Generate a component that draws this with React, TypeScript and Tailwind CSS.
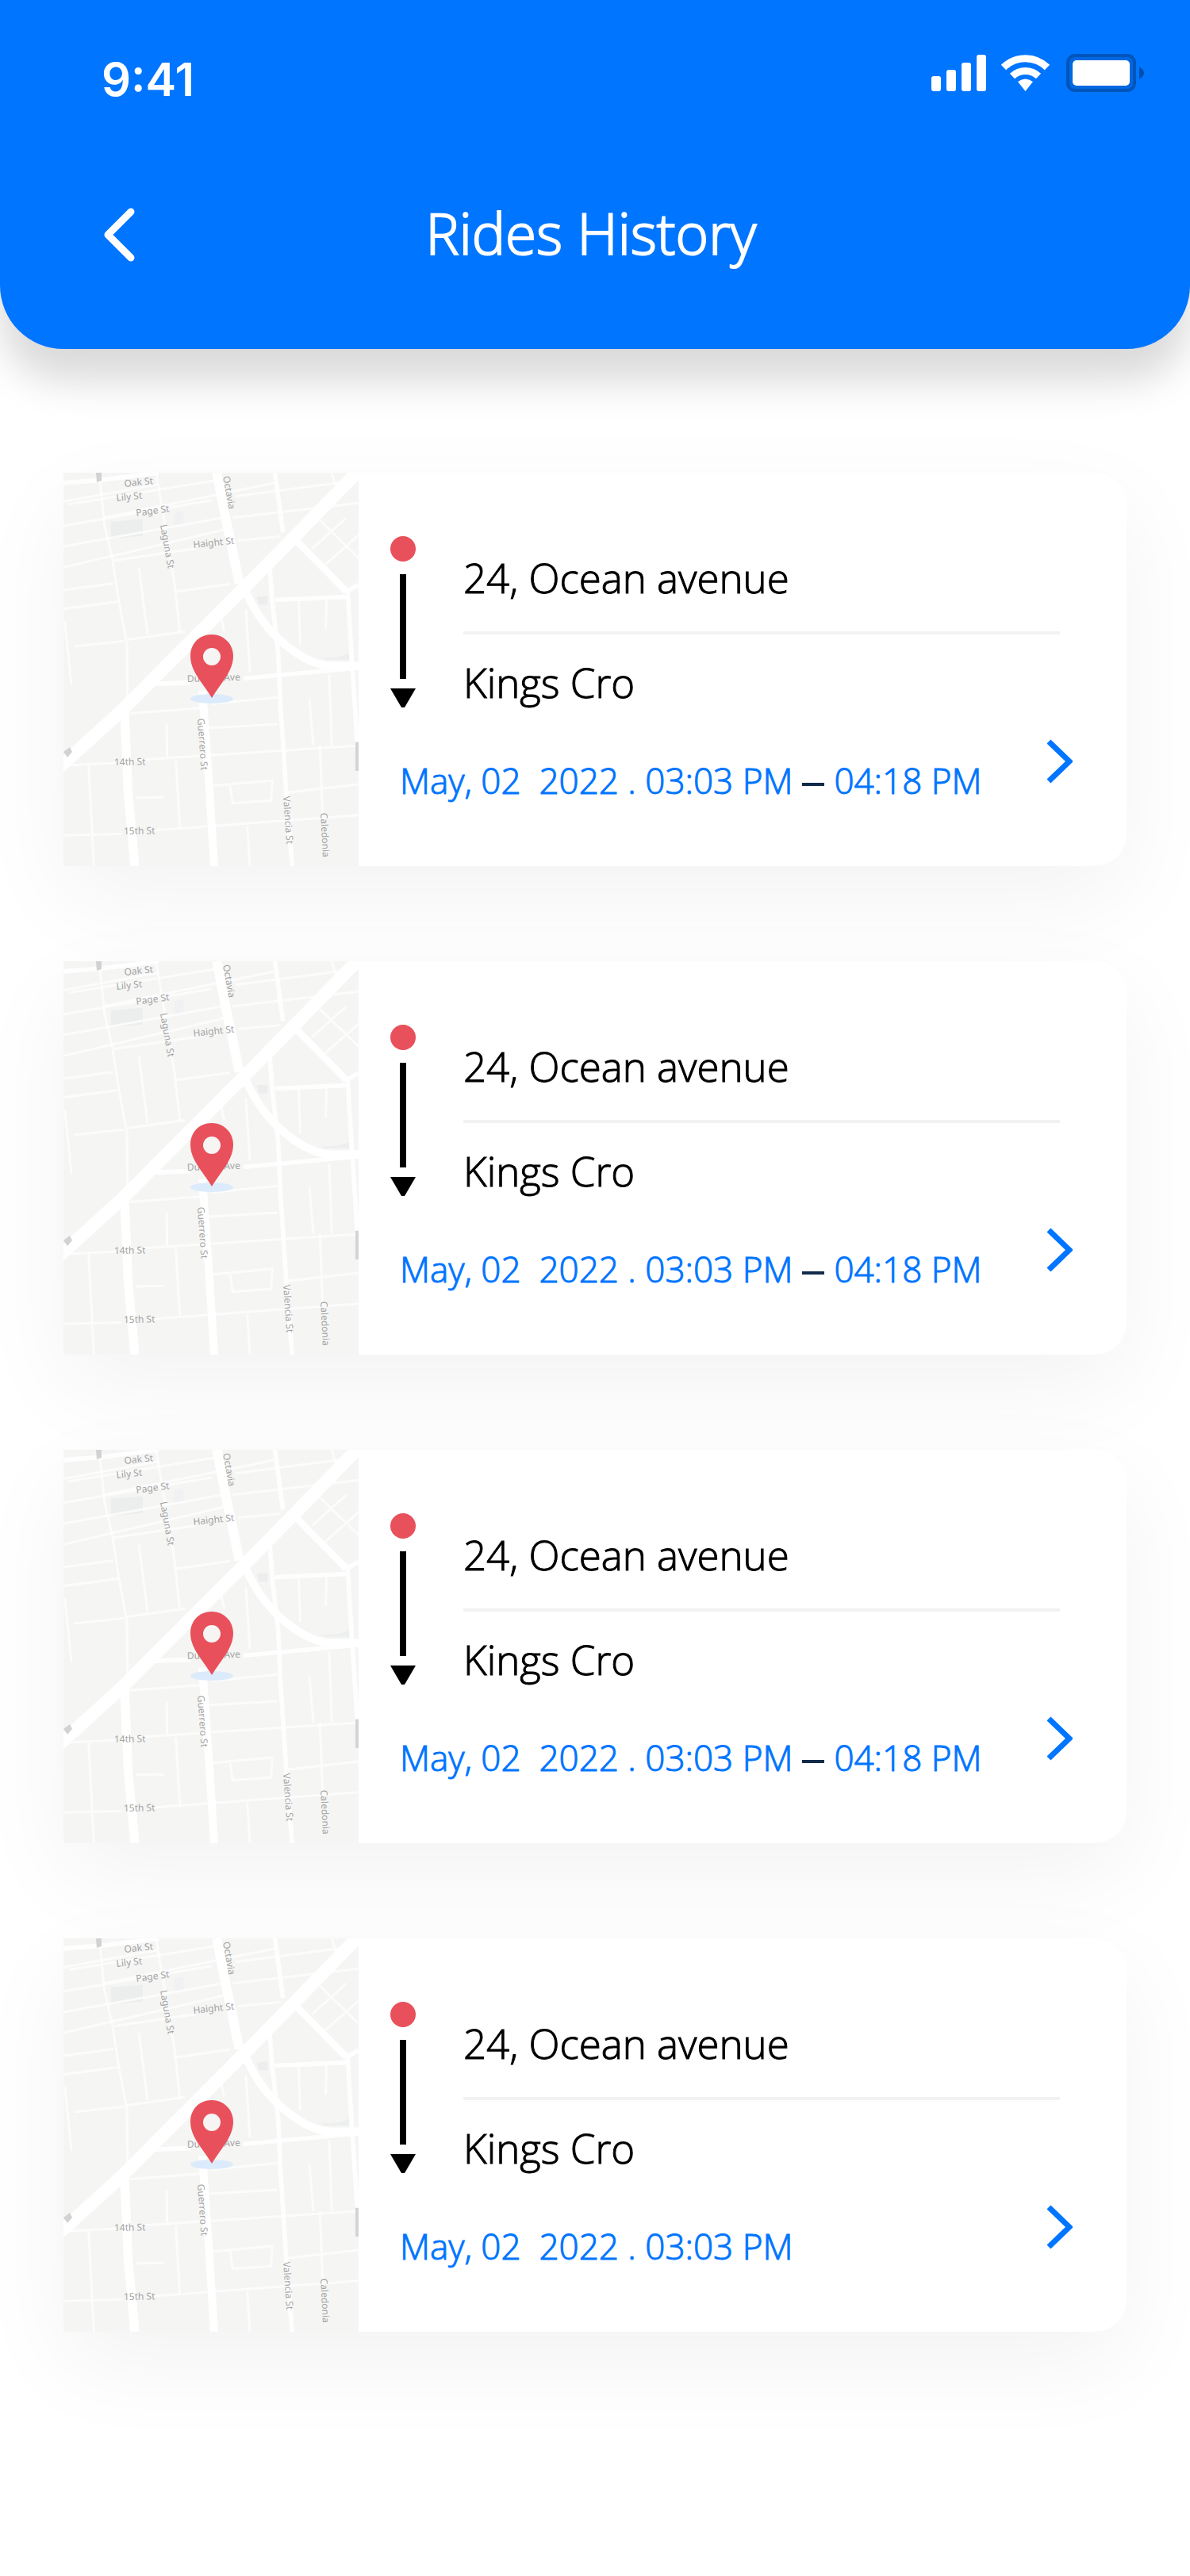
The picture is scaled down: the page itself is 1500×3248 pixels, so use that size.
type Ride = {
  id: number;
  from: string;
  to: string;
  date: string;
  start: string;
  end?: string;
};

const rides: Ride[] = [
  { id: 1, from: "24, Ocean avenue", to: "Kings Cro", date: "May, 02  2022", start: "03:03 PM", end: "04:18 PM" },
  { id: 2, from: "24, Ocean avenue", to: "Kings Cro", date: "May, 02  2022", start: "03:03 PM", end: "04:18 PM" },
  { id: 3, from: "24, Ocean avenue", to: "Kings Cro", date: "May, 02  2022", start: "03:03 PM", end: "04:18 PM" },
  { id: 4, from: "24, Ocean avenue", to: "Kings Cro", date: "May, 02  2022", start: "03:03 PM" },
];

const minorRoads = [
  "M60 155L420 90M80 165L640 75M60 245L620 150M60 322L690 210M60 400L690 255M60 485L250 460M480 492L690 462M60 555L270 528",
  "M210 215L860 85M250 375L560 330M720 300L880 285M700 215L1176 160M710 135L1176 75",
  "M195 47L215 240L245 370L265 500L300 690L302 900M410 47L440 220L480 460L500 640M345 400L378 650M65 600L90 840",
  "M100 695L290 675M300 670L520 640M650 560L668 640M750 560L765 790M950 520L955 690M1055 520L1052 630",
  "M310 945L580 925M620 910L870 885M610 1000L870 985M450 985L452 1110M330 1120L1176 1065",
  "M60 1140L260 1130M155 1140L175 1515M485 1120L500 1370M335 1260L440 1258M60 1400L280 1395M400 1382L1176 1325",
  "M625 1215L850 1195L845 1270L700 1280L690 1215M910 1240L1176 1210M755 1365L765 1515M1030 1065L1040 1330M990 890L1005 1065M1065 800L1075 1065",
  "M1030 225L1176 365M1000 330L1130 215M1050 390L1176 280M1075 47L1090 100M1155 47L1060 185",
];

const mediumRoads = [
  "M860 47L890 270M840 400L850 530L872 720L880 900L903 1250L925 1515",
  "M860 522L1140 510M1135 490L1150 740L1165 960L1170 1050M1130 490L1176 465",
  "M390 835L540 830M740 815L1176 775",
  "M60 85L200 75L420 47",
];

const mapLabels = [
  { text: "Oak St", x: 77, y: 18, angle: -6 },
  { text: "Lily St", x: 67, y: 36, angle: -6 },
  { text: "Page St", x: 92, y: 55, angle: -8 },
  { text: "Haight St", x: 164, y: 95, angle: -6 },
  { text: "Laguna St", x: 122, y: 66, angle: 80 },
  { text: "Octavia", x: 201, y: 5, angle: 80 },
  { text: "Duboce Ave", x: 156, y: 264, angle: -2 },
  { text: "Guerrero St", x: 169, y: 310, angle: 86 },
  { text: "14th St", x: 64, y: 369, angle: -1 },
  { text: "15th St", x: 76, y: 456, angle: -1 },
  { text: "Valencia St", x: 277, y: 408, angle: 86 },
  { text: "Caledonia", x: 324, y: 429, angle: 87 },
];

function RideMap() {
  return (
    <svg
      className="w-[372px] shrink-0 self-stretch bg-[#f5f5f4]"
      viewBox="0 0 372 496"
      preserveAspectRatio="xMidYMid slice"
      role="img"
      aria-label="Map of the ride"
    >
      <g transform="scale(.3333 .3379) translate(-60 -47)" fill="none" stroke="#ffffff">
        <path d="M240 230L360 220V283L240 293Z" fill="#eceeed" stroke="none" />
        <path d="M480 195L515 190V240L480 245Z" fill="#f0f1f2" stroke="none" />
        <path d="M790 510L832 507V540H800Z" fill="#eceeed" stroke="none" />
        <path d="M1030 735Q1080 745 1140 722V745H1050Z" fill="#ecefee" stroke="none" />
        {minorRoads.map((d) => (
          <path key={d} d={d} strokeWidth="9" strokeOpacity=".7" />
        ))}
        {mediumRoads.map((d) => (
          <path key={d} d={d} strokeWidth="17" strokeOpacity=".9" />
        ))}
        <path d="M640 47L670 200L700 340L725 460" strokeWidth="36" />
        <path d="M745 480Q800 610 900 690T1080 768H1176" strokeWidth="30" />
        <path d="M290 920L305 1250L330 1515" strokeWidth="34" />
        <path d="M585 860L610 1200L630 1515" strokeWidth="30" />
        <path d="M930 290L1130 490" strokeWidth="26" />
        <path d="M40 1150L280 935L740 480L920 300L1176 40" strokeWidth="48" />
      </g>
      <g fill="#a3a3a3" fontFamily="Noto Sans, sans-serif" fontSize="12">
        {mapLabels.map((label) => (
          <text key={label.text} transform={`translate(${label.x} ${label.y}) rotate(${label.angle})`}>
            {label.text}
          </text>
        ))}
      </g>
      <path d="M0 352L8 346L11 352L5 359Z" fill="#d2d2d2" />
      <path d="M41 0H48V10L42 12Z" fill="#d2d2d2" />
      <path d="M368 340h4v36h-4z" fill="#d4d4d4" />
      <ellipse cx="187" cy="285" rx="27" ry="6" fill="#dcebfb" />
      <path
        d="M187 204C171 204 160 216 160 231C160 250 174 263 187 284C200 263 214 250 214 231C214 216 202 204 187 204Z"
        fill="#e8505b"
      />
      <circle cx="187" cy="232" r="11" fill="#f7f4f4" />
    </svg>
  );
}

function RouteMarker() {
  return (
    <svg className="h-[216px] w-8 shrink-0" viewBox="0 0 32 216" aria-hidden="true">
      <circle cx="16" cy="16" r="16" fill="#e8505b" />
      <path d="M12 48h8v132h-8z" />
      <path d="M0 192h32L18 216h-4z" />
    </svg>
  );
}

function RideCard({ ride }: { ride: Ride }) {
  return (
    <li className="flex rounded-r-[40px] bg-white shadow-[0_40px_120px_rgba(0,0,0,0.05)]">
      <RideMap />
      <div className="flex min-w-0 flex-1 flex-col pt-20 pr-[68px] pb-20 pl-10">
        <div className="flex gap-[60px] pr-4">
          <RouteMarker />
          <div className="flex-1 text-[51px] leading-[60px] font-light text-black [-webkit-text-stroke:1px_currentColor]">
            <p className="border-b-4 border-[#f2f2f2] pt-[22px] pb-[38px]">{ride.from}</p>
            <p className="pt-[30px]">{ride.to}</p>
          </div>
        </div>
        <div className="mt-10 flex items-start justify-between pl-3">
          <p className="pt-6 text-[44px] leading-[56px] font-light whitespace-pre text-[#0075ff] [-webkit-text-stroke:1px_currentColor]">
            {ride.date} . {ride.start}
            {ride.end && (
              <>
                <span className="mx-3 inline-block h-1 w-7 bg-[#112b4a] align-middle" />
                {ride.end}
              </>
            )}
          </p>
          <button type="button" aria-label="Open ride details" className="h-14 w-8 shrink-0">
            <svg viewBox="0 0 32 56" fill="none" stroke="#0075ff" strokeWidth="7" aria-hidden="true">
              <path d="M2 3L28 28L2 53" />
            </svg>
          </button>
        </div>
      </div>
    </li>
  );
}

function StatusIcons() {
  return (
    <svg className="h-12 w-[270px]" viewBox="0 0 270 48" fill="#ffffff" aria-hidden="true">
      <rect x="1" y="28" width="12" height="19" rx="3" />
      <rect x="20" y="20" width="12" height="27" rx="3" />
      <rect x="39" y="11" width="12" height="36" rx="3" />
      <rect x="58" y="1" width="12" height="46" rx="3" />
      <g fill="none" stroke="#ffffff" strokeWidth="9">
        <path d="M92 17A39 39 0 0 1 147 17" />
        <path d="M103 28A24 24 0 0 1 136 28" />
      </g>
      <path d="M110 35Q119.500 28 129 35L119.500 47Z" />
      <rect x="173" y="2" width="84" height="44" rx="9" fill="#0068e2" stroke="#0055ba" strokeWidth="4" />
      <rect x="179" y="8" width="72" height="32" rx="5" />
      <path d="M263 16Q269 20 269 24T263 32Z" fill="#004fae" />
    </svg>
  );
}

export default function App() {
  return (
    <div className="min-h-screen overflow-hidden bg-white font-['Open_Sans',sans-serif]">
      <header className="rounded-b-[80px] bg-[#0075ff] pt-[68px] pb-[98px] text-white shadow-[0_40px_50px_rgba(0,0,0,0.15)]">
        <div className="flex items-start justify-between pr-[57px] pl-32">
          <time className="font-['Inter',sans-serif] text-[58px] leading-[64px] font-semibold">9:41</time>
          <StatusIcons />
        </div>
        <div className="mt-[114px] grid grid-cols-[1fr_auto_1fr] items-center pr-[138px] pl-32">
          <button type="button" aria-label="Back" className="h-[72px] w-12">
            <svg
              viewBox="0 0 48 72"
              fill="none"
              stroke="#ffffff"
              strokeWidth="9"
              strokeLinecap="round"
              strokeLinejoin="round"
              aria-hidden="true"
            >
              <path d="M37 9L8 38L37 67" />
            </svg>
          </button>
          <h1 className="text-[71px] leading-[96px] font-light [-webkit-text-stroke:2px_currentColor]">Rides History</h1>
        </div>
      </header>
      <main className="px-20 pt-[156px] pb-[308px]">
        <ul className="flex flex-col gap-[120px]">
          {rides.map((ride) => (
            <RideCard key={ride.id} ride={ride} />
          ))}
        </ul>
      </main>
    </div>
  );
}
